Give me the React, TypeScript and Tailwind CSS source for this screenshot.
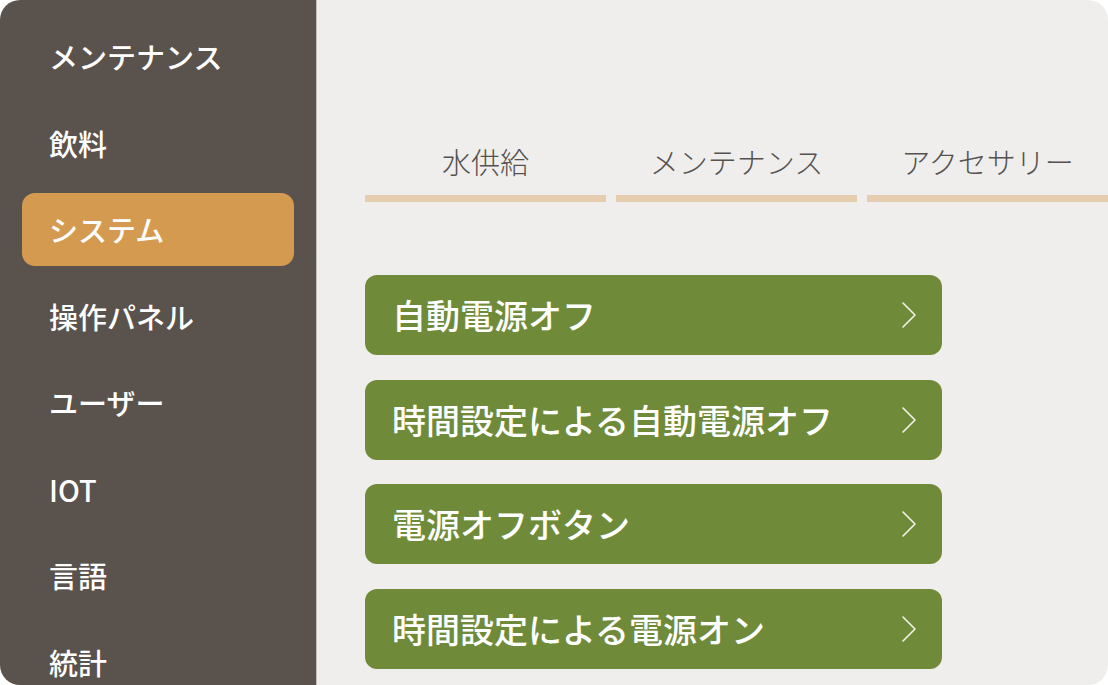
import React from "react";

const menuItems = ["メンテナンス", "飲料", "システム", "操作パネル", "ユーザー", "IOT", "言語", "統計"];
const tabs = ["水供給", "メンテナンス", "アクセサリー"];
const settings = ["自動電源オフ", "時間設定による自動電源オフ", "電源オフボタン", "時間設定による電源オン"];

const Chevron = () => (
  <svg width="18" height="28" viewBox="0 0 18 28" fill="none" className="shrink-0">
    <polyline points="3,2 15,14 3,26" stroke="#f2f2ea" strokeWidth="1.6" strokeLinecap="round" strokeLinejoin="round" />
  </svg>
);

const App: React.FC = () => {
  return (
    <div
      className="w-[1108px] h-[685px] bg-white overflow-hidden"
      style={{ fontFamily: '"Noto Sans CJK JP", "Noto Sans", sans-serif' }}
    >
      <div className="flex w-full h-full rounded-[20px] overflow-hidden">
        {/* Sidebar */}
        <aside className="w-[317px] shrink-0 h-full bg-[#5a524d] border-r border-[#c4bfba] flex flex-col gap-[13.5px] pt-[20px] px-[22px]">
          {menuItems.map((label) => {
            const active = label === "システム";
            return (
              <div
                key={label}
                className={`h-[73px] shrink-0 flex items-center pl-[27px] rounded-[13px] text-[29px] font-medium text-white leading-none ${
                  active ? "bg-[#d49b50]" : ""
                }`}
              >
                {label}
              </div>
            );
          })}
        </aside>

        {/* Content */}
        <main className="flex-1 h-full bg-[#efeeec] pl-[48px] pt-[147px] overflow-hidden">
          <div className="flex gap-[10px] w-[900px]">
            {tabs.map((t) => (
              <div key={t} className="w-[241px] shrink-0 flex flex-col items-center">
                <span className="text-[29px] font-light leading-none text-[#555250]">{t}</span>
                <div className="mt-[19px] w-full h-[7px] bg-[#e6cdb0]" />
              </div>
            ))}
          </div>

          <div className="mt-[73px] flex flex-col gap-[24.7px] w-[577px]">
            {settings.map((s) => (
              <button
                key={s}
                className="h-[80px] rounded-[12px] bg-[#6f8b3a] flex items-center justify-between pl-[27px] pr-[24px] text-left"
              >
                <span className="text-[34px] font-medium text-white leading-none">{s}</span>
                <Chevron />
              </button>
            ))}
          </div>
        </main>
      </div>
    </div>
  );
};

export default App;
